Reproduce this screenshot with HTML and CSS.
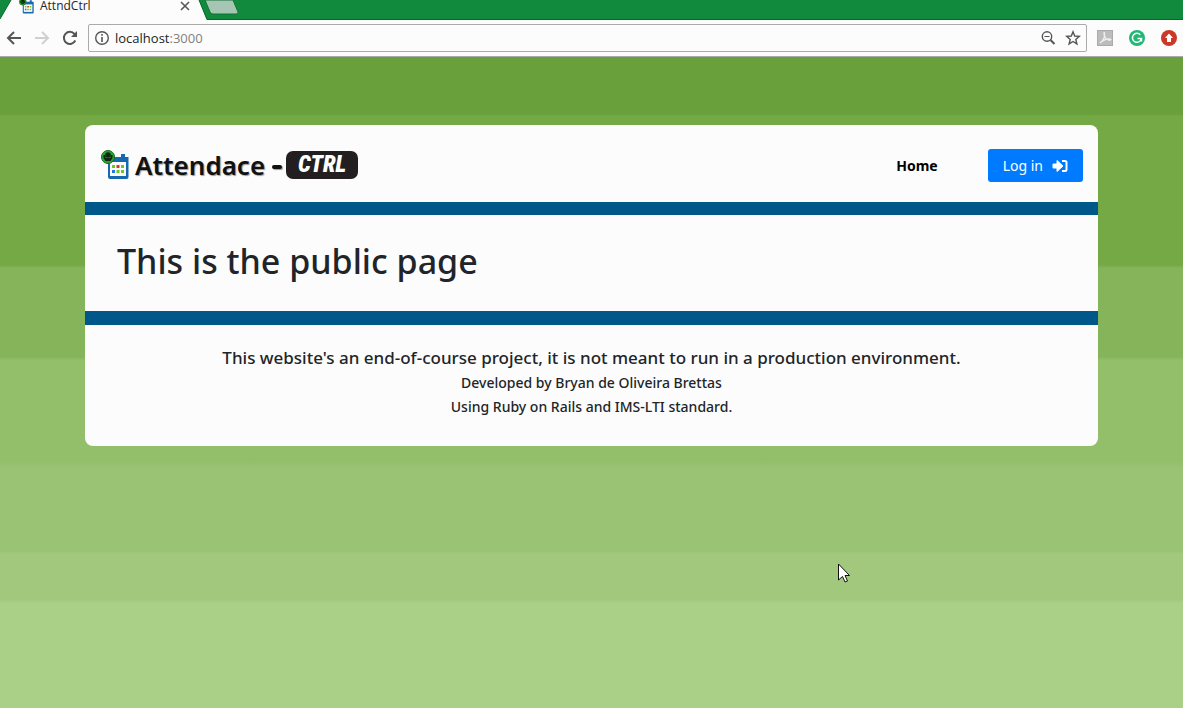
FILE: index.html
```html
<!DOCTYPE html>
<html lang="en">
<head>
<meta charset="utf-8">
<meta name="viewport" content="width=device-width, initial-scale=1">
<title>AttndCtrl</title>
<link rel="stylesheet" href="styles.css">
</head>
<body>
<svg class="defs" aria-hidden="true">
  <symbol id="calendar" viewBox="0 0 28 30">
    <path fill="#1768ae" d="M20 4h4v3h3.500v20a2 2 0 0 1-2 2H9a2 2 0 0 1-2-2V7h13z"/>
    <path fill="#fcfcfc" d="M9 12h16v14H9z"/>
    <path fill="#6fc61f" d="M11 15h3v3h-3zM20 15h3v3h-3zM15.500 20h3v3h-3zM20 20h3v3h-3z"/>
    <path fill="#d23636" d="M15.500 15h3v3h-3z"/>
    <path fill="#207bdc" d="M11 20h3v3h-3z"/>
    <circle cx="7" cy="7" r="6.500" fill="#28a52c" stroke="#176c20"/>
    <circle cx="7" cy="5" r="2.800" fill="#102713"/>
    <path fill="#102713" d="M2.500 5h2v3h5V5h2v3l-2 3h-5l-2-3z"/>
  </symbol>
</svg>
<div class="tabs">
  <svg class="tab-shape" viewBox="0 0 240 20" aria-hidden="true">
    <path d="M0 19L11 0H199L207 20H0z" fill="#fcfcfc"/>
    <path d="M0 19L11 0M199 0L207 19.500H240" fill="none" stroke="#0b662b"/>
    <path d="M205 0H233L238 12Q239 14 236 14H213Q211 14 210 12z" fill="#a6c5b2" stroke="#0d7534"/>
  </svg>
  <div class="tab">
    <svg class="favicon" aria-hidden="true"><use href="#calendar"/></svg>
    <span class="tab-title">AttndCtrl</span>
    <button class="tab-close" aria-label="Close tab"><svg viewBox="0 0 10 10" width="10" height="10"><path d="M1 1l8 8M9 1L1 9" stroke="#555" stroke-width="1.600"/></svg></button>
  </div>
</div>
<div class="toolbar">
  <button class="tool" aria-label="Back"><svg viewBox="0 0 16 16"><path d="M15 8H2M8 2L2 8l6 6" fill="none" stroke="#555" stroke-width="2"/></svg></button>
  <button class="tool" aria-label="Forward"><svg viewBox="0 0 16 16"><path d="M1 8h13M8 2l6 6-6 6" fill="none" stroke="#d0d0d0" stroke-width="2"/></svg></button>
  <button class="tool" aria-label="Reload"><svg viewBox="0 0 16 16"><path d="M13.300 10.500A6 6 0 1 1 12.500 4" fill="none" stroke="#555" stroke-width="2"/><path d="M15 1v6H9z" fill="#555"/></svg></button>
  <div class="address">
    <svg viewBox="0 0 16 16" width="16" height="16" aria-hidden="true"><circle cx="8" cy="8" r="6.300" fill="none" stroke="#555" stroke-width="1.400"/><path d="M7.200 4h1.600v1.700H7.200zM7.200 7h1.600v5H7.200z" fill="#555"/></svg>
    <span class="url">localhost<span class="port">:3000</span></span>
    <button class="tool" aria-label="Zoom"><svg viewBox="0 0 16 16"><circle cx="7" cy="6.500" r="4.700" fill="none" stroke="#555" stroke-width="1.400"/><path d="M4.500 6.500h5" stroke="#555"/><path d="M10.500 10l4 4" stroke="#555" stroke-width="2"/></svg></button>
    <button class="tool" aria-label="Bookmark"><svg viewBox="0 0 16 16"><path d="M8 1.800l1.700 4.200 4.600.4-3.500 3 1.100 4.500L8 11.500l-3.900 2.400 1.100-4.500-3.500-3L6.300 6z" fill="none" stroke="#555" stroke-width="1.400"/></svg></button>
  </div>
  <div class="extensions">
    <button class="tool" aria-label="PDF"><svg viewBox="0 0 16 16"><path d="M0 0h16v16H0z" fill="#aaa"/><path d="M1 1h14v14H1z" fill="#bcbcbc"/><path d="M3 13c3-2 5-6 4.500-10C7 1 6.500 4 8 7c1.500 3 5 4 6 2.500C13 8 7 9 3 13z" fill="none" stroke="#eee" stroke-width="1.300"/></svg></button>
    <button class="tool" aria-label="Writing assistant"><svg viewBox="0 0 16 16"><circle cx="8" cy="8" r="8" fill="#1fb874"/><path d="M11.300 4.800A4.500 4.500 0 1 0 12.300 9M8.500 8.500h4v3" fill="none" stroke="#fff" stroke-width="1.500"/></svg></button>
    <button class="tool" aria-label="Update"><svg viewBox="0 0 16 16"><circle cx="8" cy="8" r="8" fill="#c83929"/><path d="M8 3.500L12 8h-2v4H6V8H4z" fill="#fff"/></svg></button>
  </div>
</div>
<main class="page">
  <div class="card">
    <header class="header">
      <div class="brand">
        <svg class="brand-icon" aria-hidden="true"><use href="#calendar"/></svg>
        <span class="brand-name">Attendace</span>
        <span class="brand-dash"></span>
        <span class="brand-key">CTRL</span>
      </div>
      <nav class="nav">
        <a class="home" href="#">Home</a>
        <button class="login">Log in
          <svg viewBox="0 0 16 14" width="16" height="14" aria-hidden="true"><path d="M1 5h4V1.500L11 7l-6 5.500V9H1z" fill="#fff" stroke="#fff" stroke-linejoin="round"/><path d="M10 2h3a1.500 1.500 0 0 1 1.500 1.500v7A1.500 1.500 0 0 1 13 12h-3" fill="none" stroke="#fff" stroke-width="2"/></svg>
        </button>
      </nav>
    </header>
    <section class="content"><h1>This is the public page</h1></section>
    <footer class="footer">
      <p class="notice">This website's an end-of-course project, it is not meant to run in a production environment.</p>
      <p class="credit">Developed by Bryan de Oliveira Brettas</p>
      <p class="credit">Using Ruby on Rails and IMS-LTI standard.</p>
    </footer>
  </div>
</main>
<svg class="cursor" viewBox="0 0 12 20" aria-hidden="true"><path d="M.5 1v16l4-3.500 2.500 5.500 2.500-1-2.500-5.500h4.500z" fill="#fff" stroke="#111"/></svg>
</body>
</html>
```
FILE: styles.css
```css
* { box-sizing: border-box; }

body {
  margin: 0;
  min-height: 100vh;
  display: flex;
  flex-direction: column;
  font-family: "Noto Sans", "Open Sans", sans-serif;
  color: #212529;
}

button {
  margin: 0;
  padding: 0;
  border: 0;
  background: none;
  font: inherit;
}

h1, p { margin: 0; }

.defs {
  position: absolute;
  width: 0;
  height: 0;
}

.tabs {
  position: relative;
  height: 20px;
  background: #118a3e;
  border-bottom: 1px solid #0b662b;
}

.tab-shape {
  position: absolute;
  top: 0;
  left: 0;
  width: 240px;
  height: 20px;
}

.tab {
  position: relative;
  display: flex;
  align-items: center;
  gap: 6px;
  width: 190px;
  height: 12px;
  padding-left: 19px;
}

.favicon {
  width: 15px;
  height: 16px;
}

.tab-title {
  flex: 1;
  font: 12px/14px "Open Sans", sans-serif;
}

.tab-close, .tool { display: flex; }

.toolbar {
  display: flex;
  align-items: center;
  gap: 12px;
  height: 37px;
  padding: 0 6px;
  background: #fcfcfc;
  border-bottom: 1px solid #aaa;
}

.tool svg {
  width: 16px;
  height: 16px;
}

.address {
  flex: 1;
  display: flex;
  align-items: center;
  height: 28px;
  gap: 9px;
  padding: 0 5px;
  margin-left: -2px;
  margin-right: -2px;
  border: 1px solid #aaa;
  border-radius: 2px;
}

.url {
  flex: 1;
  margin-left: -4px;
  font: 13px/20px "Open Sans", sans-serif;
}

.port { color: #808080; }

.extensions {
  display: flex;
  gap: 16px;
}

.page {
  flex: 1;
  padding: 68px 85px;
  background: linear-gradient(#69a03c 57px, #74a946 59px 208px, #86b45b 211px 300px, #93be6a 303px 404px, #9bc374 412px 494px, #a2c87d 497px 543px, #aacf87 546px);
}

.card {
  background: #fcfcfc;
  border-radius: 8px;
}

.header {
  display: flex;
  align-items: center;
  justify-content: space-between;
  height: 77px;
  padding: 0 15px 0 16px;
}

.brand {
  display: flex;
  align-items: center;
  padding-top: 2px;
}

.brand-icon {
  width: 28px;
  height: 30px;
}

.brand-name {
  margin-left: 6px;
  color: #111;
  font-size: 26px;
  font-weight: 600;
  line-height: 32px;
  text-shadow: 1px 1px 1px #999;
}

.brand-dash {
  width: 10px;
  height: 4px;
  margin: 4px 4px 0 7px;
  background: #111;
  border-radius: 2px;
  box-shadow: 1px 1px 1px #999;
}

.brand-key {
  width: 72px;
  background: #231f20;
  border-radius: 7px;
  color: #fff;
  font: italic 900 23px/28px "Roboto Condensed", Roboto, sans-serif;
  text-align: center;
}

.nav {
  display: flex;
  align-items: center;
  gap: 50px;
  padding-top: 4px;
}

.home {
  color: #000;
  font-size: 14px;
  font-weight: 700;
  text-decoration: none;
}

.login {
  display: flex;
  align-items: center;
  gap: 9px;
  height: 33px;
  padding: 0 15px;
  border-radius: 3px;
  background: #007bff;
  color: #fff;
  font-size: 14px;
}

.content {
  padding: 22px 32px 26px;
  border-top: 13px solid #00578a;
  border-bottom: 14px solid #00578a;
}

h1 {
  font-size: 34px;
  font-weight: 500;
  line-height: 48px;
}

.footer {
  padding: 19px 16px 27px;
  text-align: center;
  font-weight: 500;
}

.notice {
  font-size: 17px;
  line-height: 27px;
}

.credit {
  font-size: 14px;
  line-height: 24px;
}

.cursor {
  position: absolute;
  top: 563px;
  left: 838px;
  width: 12px;
  height: 20px;
}
```
